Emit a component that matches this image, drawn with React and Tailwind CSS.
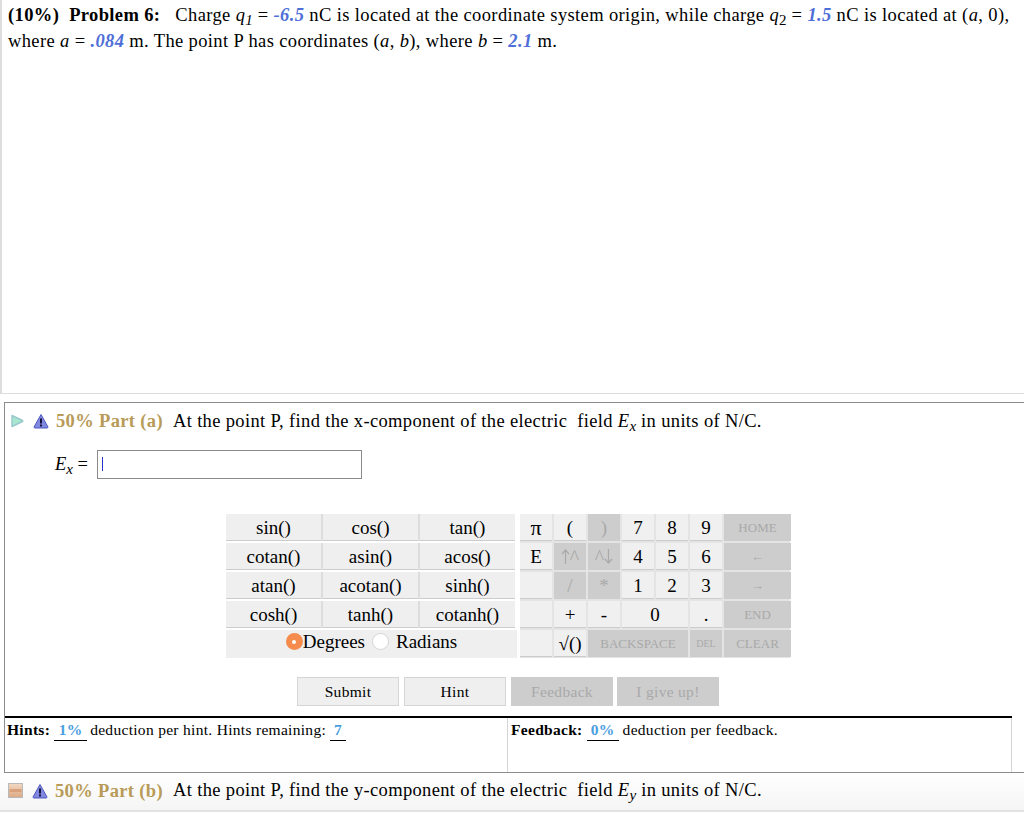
const fnRows = [
  ["sin()", "cos()", "tan()"],
  ["cotan()", "asin()", "acos()"],
  ["atan()", "acotan()", "sinh()"],
  ["cosh()", "tanh()", "cotanh()"],
];

function ArrowUp() {
  return (
    <svg width="9" height="15" viewBox="0 0 9 15" className="shrink-0">
      <path d="M4.5 15 V1 M1 5 L4.5 1 L8 5" fill="none" stroke="#a9a9a9" strokeWidth="1.2" />
    </svg>
  );
}

function ArrowDown() {
  return (
    <svg width="9" height="15" viewBox="0 0 9 15" className="shrink-0">
      <path d="M4.5 0 V14 M1 10 L4.5 14 L8 10" fill="none" stroke="#a9a9a9" strokeWidth="1.2" />
    </svg>
  );
}

const keys = [
  { t: "π", on: true, big: true }, { t: "(", on: true }, { t: ")" }, { t: "7", on: true }, { t: "8", on: true }, { t: "9", on: true }, { t: "HOME", small: true },
  { t: "E", on: true }, { t: <><ArrowUp /><span className="text-[20px]">^</span></> }, { t: <><span className="text-[20px]">^</span><ArrowDown /></> }, { t: "4", on: true }, { t: "5", on: true }, { t: "6", on: true }, { t: "←", small: true },
  { t: "", on: true }, { t: "/" }, { t: "*" }, { t: "1", on: true }, { t: "2", on: true }, { t: "3", on: true }, { t: "→", small: true },
  { t: "", on: true }, { t: "+", on: true }, { t: "-", on: true }, { t: "0", on: true, wide: true }, { t: ".", on: true }, { t: "END", small: true },
  { t: "", on: true }, { t: "√()", on: true }, { t: "BACKSPACE", small: true, wide3: true }, { t: "DEL", tiny: true }, { t: "CLEAR", small: true },
];

function Blue({ children }) {
  return <span className="italic font-bold text-[#4f6fd8]">{children}</span>;
}

function Sub({ children }) {
  return <sub className="text-[15px] bottom-0 align-[-4px] leading-none tracking-normal">{children}</sub>;
}

function WarnIcon() {
  return (
    <svg width="16" height="16" viewBox="0 0 16 16" className="shrink-0">
      <path d="M8 1.5 L15 14 Q15 15 14 15 L2 15 Q1 15 1 14 Z" fill="#8088e0" stroke="#4d57c0" strokeWidth="1" strokeLinejoin="round" />
      <rect x="7" y="5.5" width="2" height="5" fill="#14143c" />
      <rect x="7" y="11.5" width="2" height="2" fill="#14143c" />
    </svg>
  );
}

function PlayIcon() {
  return (
    <svg width="14" height="14" viewBox="0 0 14 14" className="shrink-0">
      <path d="M2 1.5 L12.5 6.5 Q13 7 12.5 7.5 L2 12.5 Z" fill="#a8e6cf" stroke="#98c8cc" strokeWidth="1.4" strokeLinejoin="round" />
    </svg>
  );
}

function MinusIcon() {
  return (
    <svg width="15" height="15" viewBox="0 0 15 15" className="shrink-0">
      <defs>
        <linearGradient id="mi" x1="0" y1="0" x2="0" y2="1">
          <stop offset="0" stopColor="#f3d9c4" />
          <stop offset="1" stopColor="#dba883" />
        </linearGradient>
      </defs>
      <rect x="0.5" y="0.5" width="14" height="14" fill="url(#mi)" stroke="#b9b9b9" />
      <rect x="1.5" y="6" width="12" height="3" fill="#d9a27c" />
    </svg>
  );
}

export default function App() {
  return (
    <div className="w-[1024px] h-[813px] overflow-hidden bg-white text-black font-['Liberation_Serif',serif] text-[18.5px] leading-[24px]">
      {/* problem text */}
      <div className="h-[394px] border-l-2 border-b border-[#dddddd] pl-[6px] pt-[3px] tracking-[0.37px] whitespace-nowrap">
        <div className="h-[26px]">
          <b>(10%)&nbsp; Problem 6:</b>&nbsp;&nbsp; Charge <i>q</i><Sub><i>1</i></Sub> = <Blue>-6.5</Blue> nC is located at the coordinate system origin, while charge <i>q</i><Sub>2</Sub> = <Blue>1.5</Blue> nC is located at (<i>a</i>, 0),
        </div>
        <div>where <i>a</i> = <Blue>.084</Blue> m. The point P has coordinates (<i>a</i>, <i>b</i>), where <i>b</i> = <Blue>2.1</Blue> m.</div>
      </div>

      {/* part a */}
      <div className="mt-[8px] ml-[4px] h-[371px] border-l border-t border-b border-[#8c8c8c] flex flex-col">
        <div className="flex items-center h-[35px] pt-[1px] pl-[5px] whitespace-nowrap tracking-[0.35px]">
          <PlayIcon />
          <span className="w-[9px]" />
          <WarnIcon />
          <b className="ml-[7px] text-[#b89b58]">50% Part (a)</b>
          <span className="ml-[10px]">At the point P, find the x-component of the electric&nbsp; field <i>E</i><Sub><i>x</i></Sub> in units of N/C.</span>
        </div>

        <div className="flex items-center mt-[11px] h-[30px]">
          <span className="ml-[50px] w-[42px] italic whitespace-nowrap"><i>E</i><Sub><i>x</i></Sub><span className="not-italic"> =</span></span>
          <div className="w-[265px] h-[29px] border border-[#8a8a8a] flex items-center pl-[4px]">
            <span className="w-px h-[14px] bg-[#2a34c8]" />
          </div>
        </div>

        {/* calculator */}
        <div className="flex mt-[35px] ml-[221px] text-[19px]">
          <div className="w-[293px]">
            {fnRows.map((row, i) => (
              <div key={i} className="flex gap-[2px] mb-[2px] w-[289px] bg-[#dddddd]">
                {row.map((f) => (
                  <div key={f} className="w-[95px] h-[27px] pt-[1px] bg-[#efefef] border-b border-[#cccccc] flex items-center justify-center">{f}</div>
                ))}
              </div>
            ))}
            <div className="w-[291px] h-[28px] pb-[5px] bg-[#efefef] flex items-center justify-center whitespace-nowrap">
              <span className="w-[17px] h-[17px] rounded-full bg-[#f58b4c] flex items-center justify-center">
                <span className="w-[4px] h-[4px] rounded-full bg-white" />
              </span>
              <span>Degrees</span>
              <span className="ml-[7px] w-[17px] h-[17px] rounded-full bg-white border border-[#d5d5d5]" />
              <span className="ml-[7px]">Radians</span>
            </div>
          </div>
          <div className="ml-[1px] grid grid-cols-[32px_32px_32px_32px_32px_32px_67px] auto-rows-[27px] gap-[2px] w-[270px] bg-[#e4e4e4]">
            {keys.map((k, i) => (
              <div
                key={i}
                className={
                  "flex items-center justify-center pt-[1px] border-b border-[#cccccc] " +
                  (k.on ? "bg-[#f0f0f0] " : "bg-[#cdcdcd] text-[#a9a9a9] ") +
                  (k.wide ? "col-span-2 " : "") +
                  (k.wide3 ? "col-span-3 " : "") +
                  (k.small ? "text-[13px] " : "") +
                  (k.tiny ? "text-[10px] " : "") +
                  (k.big ? "text-[22px] " : "")
                }
              >
                {k.t}
              </div>
            ))}
          </div>
        </div>

        {/* buttons */}
        <div className="flex mt-[19px] ml-[292px] gap-[4px] text-[15.5px] tracking-[0.3px]">
          <div className="w-[102px] h-[29px] bg-[#efefef] border border-[#d5d5d5] flex items-center justify-center">Submit</div>
          <div className="ml-px w-[102px] h-[29px] bg-[#efefef] border border-[#d5d5d5] flex items-center justify-center">Hint</div>
          <div className="ml-px w-[102px] h-[29px] bg-[#cdcdcd] text-[#a9a9a9] flex items-center justify-center">Feedback</div>
          <div className="w-[102px] h-[29px] bg-[#cdcdcd] text-[#a9a9a9] flex items-center justify-center">I give up!</div>
        </div>

        {/* hints and feedback */}
        <div className="mt-[10px] w-[1007px] flex-1 border-t-[2px] border-black flex text-[15.5px] leading-[20px] tracking-[0.3px] whitespace-nowrap">
          <div className="w-[503px] pl-[2px] pt-[2px] border-r border-[#d5d5d5]">
            <b>Hints:</b>
            <span className="inline-block ml-[4px] w-[33px] text-center border-b border-black font-bold text-[#4a9ee0]">1%</span>
            <span className="ml-[3px]">deduction per hint. Hints remaining:</span>
            <span className="inline-block ml-[4px] w-[16px] text-center border-b border-black font-bold text-[#4a9ee0]">7</span>
          </div>
          <div className="flex-1 pl-[3px] pt-[2px] border-r border-[#d5d5d5]">
            <b>Feedback:</b>
            <span className="inline-block ml-[4px] w-[32px] text-center border-b border-black font-bold text-[#4a9ee0]">0%</span>
            <span className="ml-[4px]">deduction per feedback.</span>
          </div>
        </div>
      </div>

      {/* part b */}
      <div className="h-[39px] pb-[2px] flex items-center pl-[8px] border-b-2 border-[#e2e2e2] bg-gradient-to-b from-white to-[#f5f5f5] whitespace-nowrap tracking-[0.35px]">
        <MinusIcon />
        <span className="w-[9px]" />
        <WarnIcon />
        <b className="ml-[7px] text-[#b89b58]">50% Part (b)</b>
        <span className="ml-[10px]">At the point P, find the y-component of the electric&nbsp; field <i>E</i><Sub><i>y</i></Sub> in units of N/C.</span>
      </div>
    </div>
  );
}
